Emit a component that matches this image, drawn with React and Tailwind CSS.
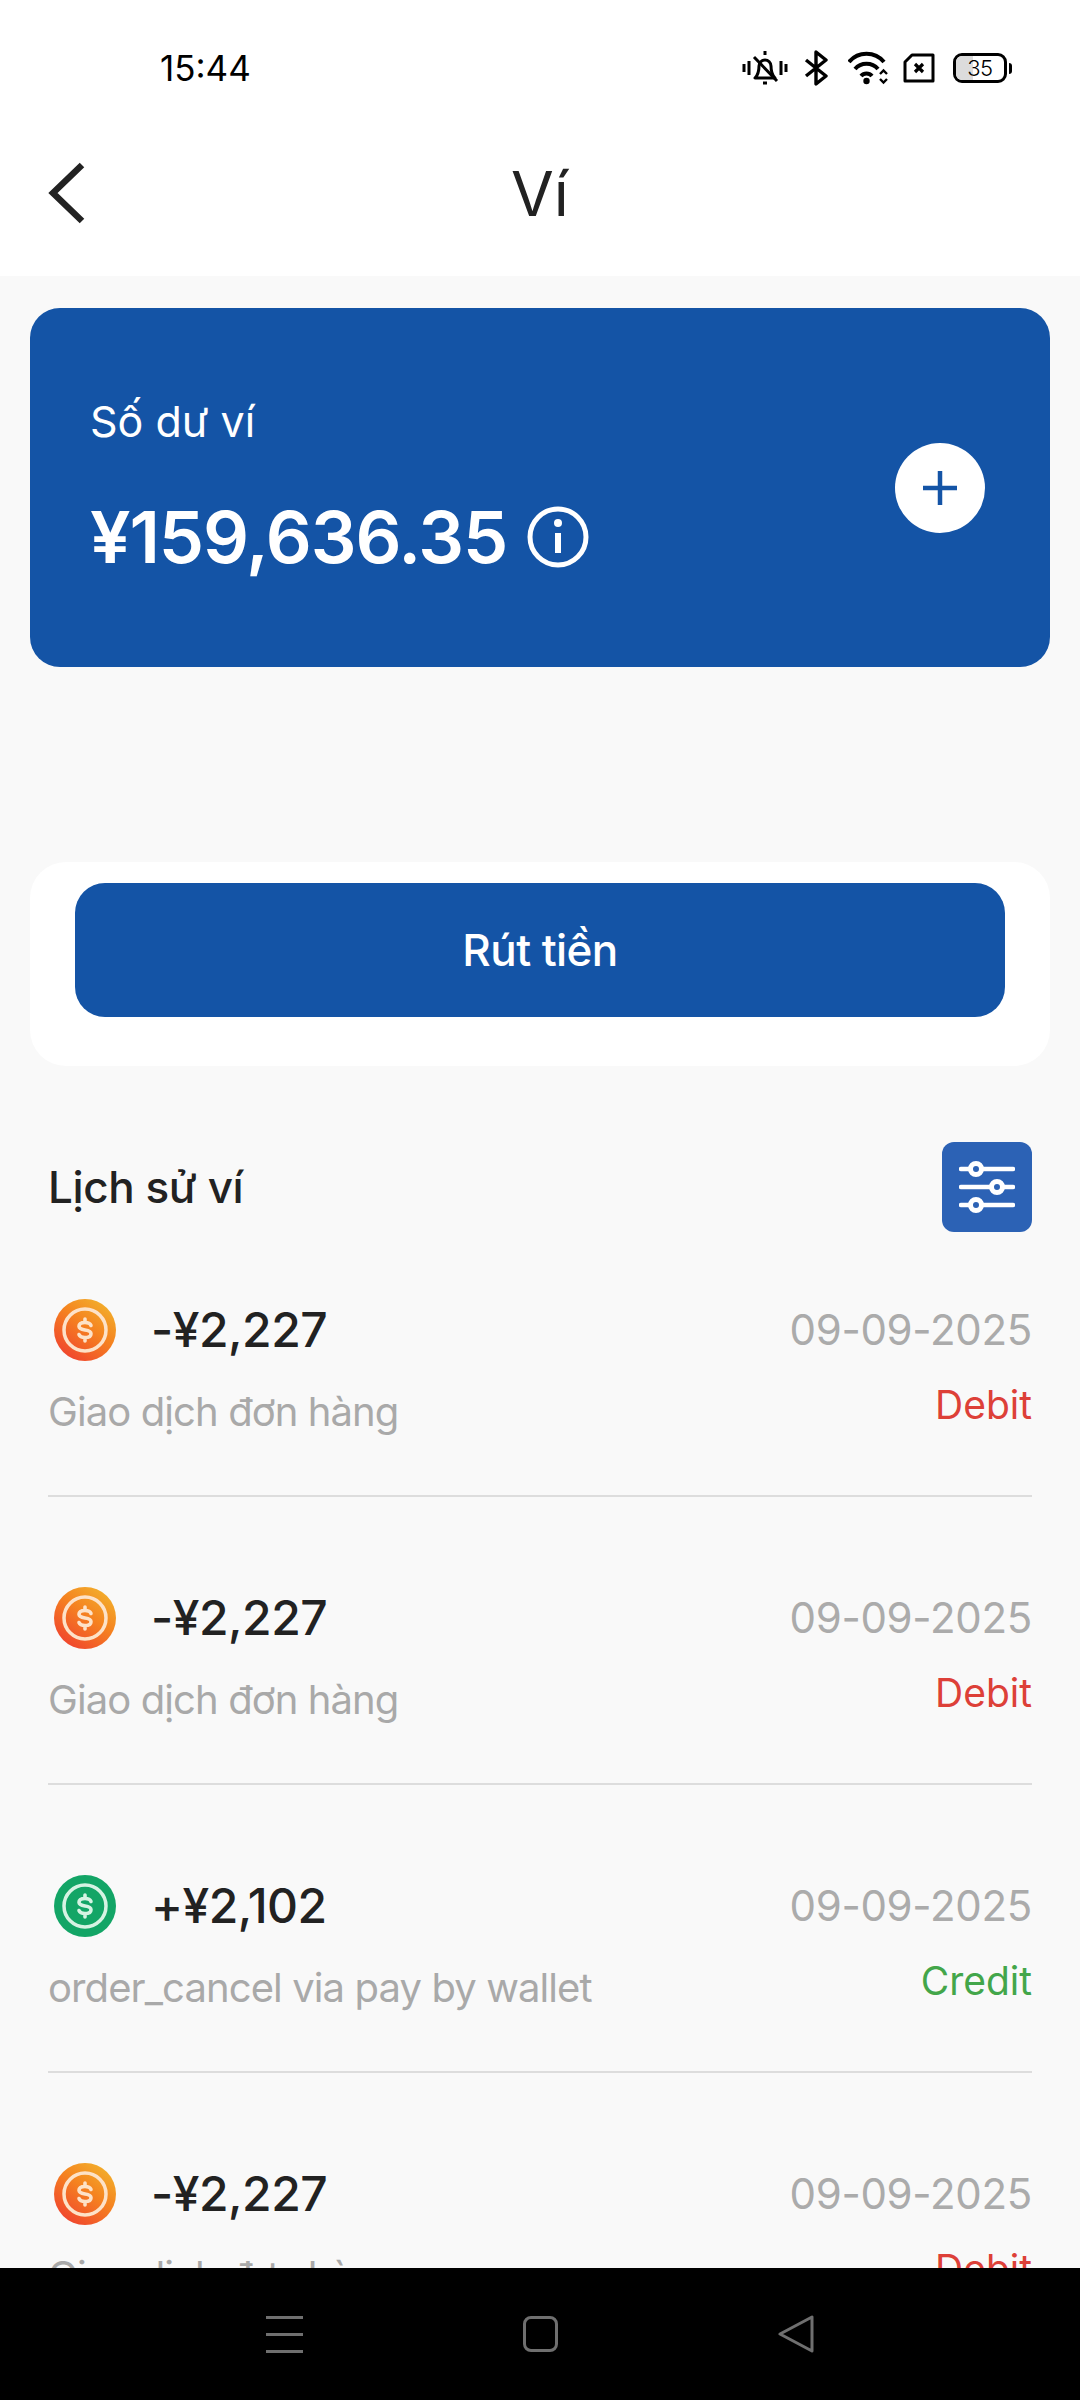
import React from 'react';

const ROWS = [
    { amount: '-¥2,227', note: 'Giao dịch đơn hàng', type: 'Debit' },
    { amount: '-¥2,227', note: 'Giao dịch đơn hàng', type: 'Debit' },
    { amount: '+¥2,102', note: 'order_cancel via pay by wallet', type: 'Credit' },
    { amount: '-¥2,227', note: 'Giao dịch đơn hàng', type: 'Debit' },
];

const StatusIcons = () => (
    <div className="flex items-center text-black">
        {/* muted bell with vibrate ticks */}
        <svg width="48" height="36" viewBox="0 0 48 36" fill="none" stroke="currentColor" strokeWidth="3" className="mr-[15px]">
            <path d="M3 14v8M8 11v14M40 11v14M45 14v8" />
            <path d="M24 1v4M14 28h20c-3-3-4-6-4-12a6 6 0 0 0-12 0c0 6-1 9-4 12Z" strokeLinejoin="round" />
            <path d="M13 7l23 24" />
            <path d="M22 33h4" />
        </svg>
        <svg width="24" height="36" viewBox="0 0 24 36" fill="none" stroke="currentColor" strokeWidth="3.400" className="mr-[20px]">
            <path d="M2 10l20 16-10 8V2l10 8L2 26" strokeLinejoin="round" />
        </svg>
        <svg width="42" height="36" viewBox="0 0 42 36" fill="none" stroke="currentColor" className="mr-[13px]">
            <path d="M1 12C10 1 27 1 36 12" strokeWidth="4" />
            <path d="M7 19c6-7 17-7 23 0" strokeWidth="4" />
            <path d="M13 26c3-3.500 8-3.500 11 0" strokeWidth="4" />
            <circle cx="18.500" cy="31" r="3.200" fill="currentColor" stroke="none" />
            <path d="M32 24l3.500-3.500L39 24M32 29l3.500 3.500L39 29" strokeWidth="2.400" />
        </svg>
        <svg width="32" height="30" viewBox="0 0 32 30" fill="none" stroke="currentColor" strokeWidth="3" className="mr-[18px]">
            <path d="M9 2h21v26H2V9Z" strokeLinejoin="round" />
            <path d="M12 11l8 8M20 11l-8 8" strokeWidth="3.200" />
        </svg>
        <div className="flex items-center">
            <div className="relative h-[30px] w-[54px] overflow-hidden rounded-[9px] border-[3px] border-black">
                <div className="h-full w-[35%] bg-[#dcdcdc]" />
                <span className="absolute inset-0 flex items-center justify-center text-[22px] font-light leading-none tracking-tight">35</span>
            </div>
            <div className="ml-[2px] h-[11px] w-[3px] rounded-r-sm bg-black" />
        </div>
    </div>
);

const Coin = ({ credit, id }) => {
    const pale = credit ? '#d6f3e3' : '#fde2c8';
    return (
        <svg width="64" height="64" viewBox="0 0 64 64">
            <defs>
                <linearGradient id={id} x1="0.85" y1="0.05" x2="0.2" y2="0.95">
                    <stop offset="0" stopColor="#f2b02c" />
                    <stop offset="0.45" stopColor="#f58220" />
                    <stop offset="1" stopColor="#f0452e" />
                </linearGradient>
            </defs>
            <circle cx="32" cy="32" r="31" fill={credit ? '#13a566' : `url(#${id})`} />
            <circle cx="32" cy="32" r="21" fill="none" stroke={pale} strokeWidth="3.500" />
            <path d="M38 27.500c-.8-2-3-3-6-3-3.500 0-6 1.300-6 3.800s2.500 3.200 6 3.700 6 1.200 6 3.700-2.500 3.800-6 3.800c-3 0-5.200-1-6-3M32 21v3.500M32 39.500V43"
                fill="none" stroke={pale} strokeWidth="3.600" strokeLinecap="round" />
        </svg>
    );
};

const FilterIcon = () => (
    <svg width="56" height="56" viewBox="0 0 56 56" fill="none" stroke="white" strokeWidth="4.500" strokeLinecap="round">
        <path d="M2 10h52M2 28h52M2 46h52" />
        <g strokeWidth="5">
            <circle cx="17" cy="10" r="5.500" fill="#2c62b5" />
            <circle cx="38" cy="28" r="5.500" fill="#2c62b5" />
            <circle cx="17" cy="46" r="5.500" fill="#2c62b5" />
        </g>
    </svg>
);

const HistoryRow = ({ row, index }) => {
    const credit = row.type === 'Credit';
    return (
        <div className="h-[288px] shrink-0 pt-[64px]">
            <div className="flex h-[64px] items-center justify-between">
                <div className="flex items-center">
                    <div className="ml-[5px] mr-[34px]">
                        <Coin credit={credit} id={`coin-${index}`} />
                    </div>
                    <span className="text-[48px] font-medium leading-none tracking-[-0.5px] text-[#222222]">{row.amount}</span>
                </div>
                <span className="text-[42px] leading-none tracking-[-0.3px] text-[#ababab]">09-09-2025</span>
            </div>
            <div className="flex h-[76px] items-start justify-between">
                <span className="mt-[24px] text-[40px] leading-[52px] tracking-[-0.9px] text-[#a9a9a9]">{row.note}</span>
                <span className={`mt-[18px] text-[39px] leading-[50px] ${credit ? 'text-[#43a64a]' : 'text-[#dd4038]'}`}>{row.type}</span>
            </div>
            <div className="mt-[57px] h-[2px] bg-[#dddddd]" />
        </div>
    );
};

export default function App() {
    return (
        <div className="flex h-[2400px] w-[1080px] flex-col overflow-hidden bg-[#f9f9f9] font-['Inter',sans-serif]">
            <div className="h-[276px] shrink-0 bg-white">
                <div className="flex h-[138px] items-center justify-between pb-[2px] pl-[160px] pr-[68px]">
                    <span className="text-[35px] leading-none text-black">15:44</span>
                    <StatusIcons />
                </div>
                <div className="relative flex h-[112px] items-center justify-center">
                    <svg width="42" height="62" viewBox="0 0 42 62" fill="none" stroke="#222222" strokeWidth="6.500" className="absolute left-[46px] top-[24px]">
                        <path d="M36 3L7 31l29 28" />
                    </svg>
                    <span className="text-[62px] leading-none text-[#222222]">Ví</span>
                </div>
            </div>

            <div className="flex-1 overflow-hidden px-[30px] pt-[32px]">
                <div className="flex h-[359px] items-center justify-between rounded-[30px] bg-[#1454a6] pl-[60px] pr-[65px]">
                    <div className="pb-[4px] text-white">
                        <div className="text-[43px] leading-[52px]">Số dư ví</div>
                        <div className="mt-[50px] flex items-center">
                            <span className="text-[72px] font-semibold leading-[80px] tracking-[-1.1px]">¥159,636.35</span>
                            <svg width="62" height="62" viewBox="0 0 62 62" fill="none" stroke="white" className="ml-[20px]">
                                <circle cx="31" cy="31" r="28" strokeWidth="5" />
                                <path d="M31 27v20" strokeWidth="6" />
                                <circle cx="31" cy="17" r="4" fill="white" stroke="none" />
                            </svg>
                        </div>
                    </div>
                    <div className="flex h-[90px] w-[90px] items-center justify-center rounded-full bg-white">
                        <svg width="36" height="36" viewBox="0 0 36 36" stroke="#1454a6" strokeWidth="4.500">
                            <path d="M18 1v34M1 18h34" />
                        </svg>
                    </div>
                </div>

                <div className="mt-[195px] flex h-[204px] items-start justify-center rounded-[36px] bg-white px-[45px] pt-[21px]">
                    <div className="flex h-[134px] w-full items-center justify-center rounded-[30px] bg-[#1454a6] text-[44px] font-medium tracking-[-0.6px] text-white">
                        Rút tiền
                    </div>
                </div>

                <div className="px-[18px]">
                    <div className="mt-[76px] flex h-[90px] items-center justify-between">
                        <span className="text-[44px] font-medium tracking-[-0.4px] text-[#222222]">Lịch sử ví</span>
                        <div className="flex h-[90px] w-[90px] items-center justify-center rounded-[12px] bg-[#2c62b5]">
                            <FilterIcon />
                        </div>
                    </div>
                    <div className="mt-[2px] flex flex-col">
                        {ROWS.map((row, i) => (
                            <HistoryRow key={i} row={row} index={i} />
                        ))}
                    </div>
                </div>
            </div>

            <div className="flex h-[132px] shrink-0 items-center justify-center bg-black">
                <div className="flex w-[548px] items-center justify-between">
                    <div className="flex h-[37px] w-[37px] flex-col justify-between">
                        <div className="h-[3px] bg-[#6f6f6f]" />
                        <div className="h-[3px] bg-[#6f6f6f]" />
                        <div className="h-[3px] bg-[#6f6f6f]" />
                    </div>
                    <div className="h-[36px] w-[35px] rounded-[8px] border-[3px] border-[#6f6f6f]" />
                    <svg width="36" height="38" viewBox="0 0 36 38" fill="none" stroke="#6f6f6f" strokeWidth="3" strokeLinejoin="round">
                        <path d="M34 2v34L2 19Z" />
                    </svg>
                </div>
            </div>
        </div>
    );
}
